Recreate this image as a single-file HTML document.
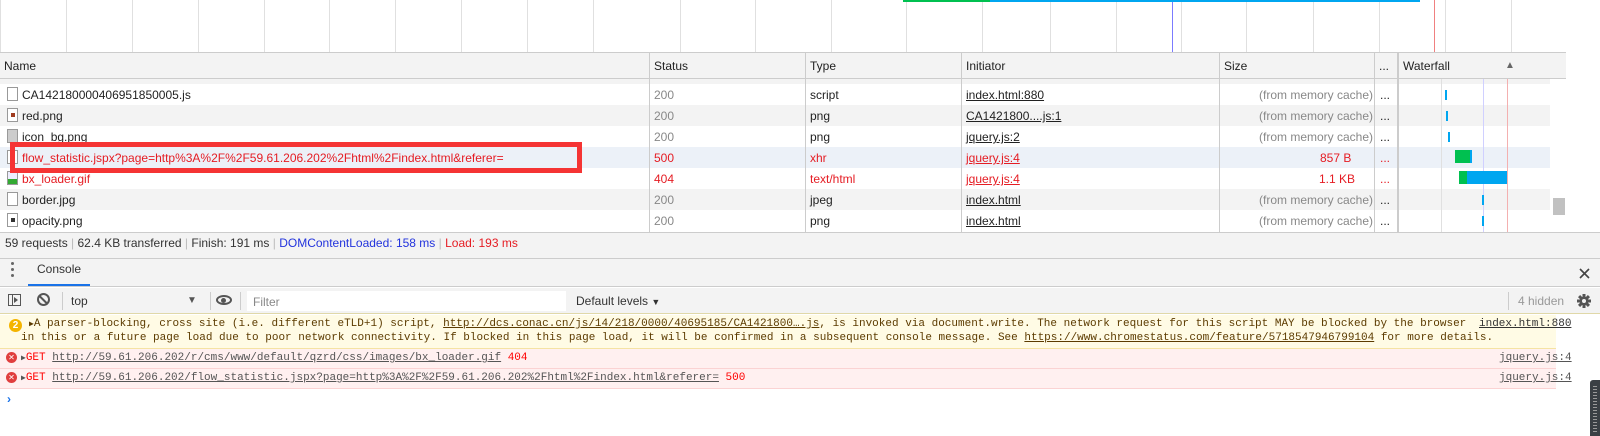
<!DOCTYPE html>
<html><head><meta charset="utf-8"><style>
*{box-sizing:border-box;margin:0;padding:0}
body{width:1600px;height:436px;overflow:hidden;background:#fff;font-family:"Liberation Sans",sans-serif;font-size:12px;color:#222;position:relative}
.a{position:absolute}
.vl{position:absolute;top:0;height:52px;width:1px;background:#e0e0e0}
.hdr{top:52px;left:0;width:1566px;height:27px;background:#f3f3f3;border-top:1px solid #ccc;border-bottom:1px solid #ccc}
.hdr span{position:absolute;top:6px}
.cs{position:absolute;top:52px;width:1px;height:180px;background:#ccc}
.row{position:absolute;left:0;width:1550px;height:21px}
.row span{position:absolute;top:4px;white-space:nowrap}
.g{color:#888}.r{color:#e51c23}.u{text-decoration:underline}
.ic{position:absolute;left:7px;top:3px;width:11px;height:14px;border:1px solid #999;background:#fff}
.mono{font-family:"Liberation Mono",monospace;font-size:11px;white-space:pre}
.msg{position:absolute;left:0;width:1556px}
</style></head><body>
<div class="vl" style="left:0"></div>
<div class="vl" style="left:66px"></div><div class="vl" style="left:132px"></div><div class="vl" style="left:198px"></div><div class="vl" style="left:264px"></div><div class="vl" style="left:329px"></div><div class="vl" style="left:395px"></div><div class="vl" style="left:461px"></div><div class="vl" style="left:527px"></div><div class="vl" style="left:593px"></div><div class="vl" style="left:680px"></div><div class="vl" style="left:755px"></div><div class="vl" style="left:831px"></div><div class="vl" style="left:906px"></div><div class="vl" style="left:982px"></div><div class="vl" style="left:1050px"></div><div class="vl" style="left:1116px"></div><div class="vl" style="left:1181px"></div><div class="vl" style="left:1246px"></div><div class="vl" style="left:1313px"></div><div class="vl" style="left:1379px"></div><div class="vl" style="left:1445px"></div><div class="vl" style="left:1511px"></div>
<div class="a" style="left:1172px;top:0;width:1px;height:52px;background:#7b7bff"></div>
<div class="a" style="left:1434px;top:0;width:1px;height:52px;background:#f08080"></div>
<div class="a" style="left:903px;top:0;width:87px;height:2px;background:#00c050"></div>
<div class="a" style="left:990px;top:0;width:430px;height:2px;background:#00a6f0"></div>
<div class="a hdr"><span style="left:4px">Name</span><span style="left:654px">Status</span><span style="left:810px">Type</span><span style="left:966px">Initiator</span><span style="left:1224px">Size</span><span style="left:1379px">...</span><span style="left:1403px">Waterfall</span><span style="left:1505px;font-size:10px;color:#666;top:7px">▲</span></div>
<div class="a" style="left:1550px;top:79px;width:16px;height:153px;background:#fff"></div>
<div class="a" style="left:1512px;top:86px;font-size:8px;color:#555">▲</div>
<div class="a" style="left:1553px;top:198px;width:12px;height:17px;background:#c1c1c1"></div>
<div class="a" style="left:1512px;top:218px;font-size:8px;color:#aaa">▼</div>
<div class="row" style="top:79px;height:5px;background:#f3f3f3;overflow:hidden"></div>
<div class="row" style="top:84px;background:#fff"><div class="ic"></div><span style="left:22px">CA142180000406951850005.js</span><span class="g" style="left:654px">200</span><span style="left:810px">script</span><span class="u" style="left:966px">index.html:880</span><span class="g" style="left:1259px">(from memory cache)</span><span style="left:1380px">...</span></div>
<div class="row" style="top:105px;background:#f3f3f3"><div class="ic"><div class="a" style="left:3px;top:4px;width:4px;height:4px;background:#a03c20"></div></div><span style="left:22px">red.png</span><span class="g" style="left:654px">200</span><span style="left:810px">png</span><span class="u" style="left:966px">CA1421800....js:1</span><span class="g" style="left:1259px">(from memory cache)</span><span style="left:1380px">...</span></div>
<div class="row" style="top:126px;background:#fff"><div class="ic" style="background:#ccc"></div><span style="left:22px">icon_bg.png</span><span class="g" style="left:654px">200</span><span style="left:810px">png</span><span class="u" style="left:966px">jquery.js:2</span><span class="g" style="left:1259px">(from memory cache)</span><span style="left:1380px">...</span></div>
<div class="row" style="top:147px;background:#ecf1f8"><div class="ic"></div><span class="r" style="left:22px">flow_statistic.jspx?page=http%3A%2F%2F59.61.206.202%2Fhtml%2Findex.html&amp;referer=</span><span class="r" style="left:654px">500</span><span class="r" style="left:810px">xhr</span><span class="r u" style="left:966px">jquery.js:4</span><span class="r" style="left:1320px">857 B</span><span class="r" style="left:1380px">...</span></div>
<div class="row" style="top:168px;background:#fff"><div class="ic" style="background:linear-gradient(#eef 60%,#3a3 60%)"></div><span class="r" style="left:22px">bx_loader.gif</span><span class="r" style="left:654px">404</span><span class="r" style="left:810px">text/html</span><span class="r u" style="left:966px">jquery.js:4</span><span class="r" style="left:1319px">1.1 KB</span><span class="r" style="left:1380px">...</span></div>
<div class="row" style="top:189px;background:#f3f3f3"><div class="ic"></div><span style="left:22px">border.jpg</span><span class="g" style="left:654px">200</span><span style="left:810px">jpeg</span><span class="u" style="left:966px">index.html</span><span class="g" style="left:1259px">(from memory cache)</span><span style="left:1380px">...</span></div>
<div class="row" style="top:210px;background:#fff"><div class="ic"><div class="a" style="left:3px;top:4px;width:4px;height:4px;background:#333"></div></div><span style="left:22px">opacity.png</span><span class="g" style="left:654px">200</span><span style="left:810px">png</span><span class="u" style="left:966px">index.html</span><span class="g" style="left:1259px">(from memory cache)</span><span style="left:1380px">...</span></div>
<div class="cs" style="left:649px"></div><div class="cs" style="left:805px"></div><div class="cs" style="left:961px"></div><div class="cs" style="left:1219px"></div><div class="cs" style="left:1374px"></div><div class="cs" style="left:1397px;width:2px"></div>
<div class="a" style="left:1441px;top:79px;width:1px;height:153px;background:#e0e0e0"></div>
<div class="a" style="left:1483px;top:79px;width:1px;height:153px;background:#d0d0ff"></div>
<div class="a" style="left:1507px;top:79px;width:1px;height:153px;background:#f4b0b0"></div>
<div class="a" style="left:1445px;top:90px;width:2px;height:10px;background:#00a6f0"></div>
<div class="a" style="left:1446px;top:111px;width:2px;height:10px;background:#00a6f0"></div>
<div class="a" style="left:1448px;top:132px;width:2px;height:10px;background:#00a6f0"></div>
<div class="a" style="left:1455px;top:150px;width:15px;height:13px;background:#00c050"></div><div class="a" style="left:1470px;top:150px;width:2px;height:13px;background:#00a6f0"></div>
<div class="a" style="left:1459px;top:171px;width:8px;height:13px;background:#00c050"></div><div class="a" style="left:1467px;top:171px;width:40px;height:13px;background:#00a6f0"></div>
<div class="a" style="left:1482px;top:195px;width:2px;height:10px;background:#00a6f0"></div>
<div class="a" style="left:1482px;top:216px;width:2px;height:10px;background:#00a6f0"></div>
<div class="a" style="left:10px;top:142px;width:572px;height:31px;border:5px solid #f53434"></div>
<div class="a" style="left:0;top:232px;width:1600px;height:27px;background:#f3f3f3;border-top:1px solid #ccc;border-bottom:1px solid #ccc"></div>
<div class="a" style="top:236px;left:5px;white-space:pre;color:#333">59 requests <span style="color:#bbb">|</span> 62.4 KB transferred <span style="color:#bbb">|</span> Finish: 191 ms <span style="color:#bbb">|</span> <span style="color:#2233dd">DOMContentLoaded: 158 ms</span> <span style="color:#bbb">|</span> <span style="color:#e51c23">Load: 193 ms</span></div>
<div class="a" style="left:0;top:259px;width:1600px;height:28px;background:#f3f3f3;border-bottom:1px solid #ccc"></div>
<div class="a" style="left:11px;top:262px;width:3px;height:3px;border-radius:50%;background:#666"></div>
<div class="a" style="left:11px;top:268px;width:3px;height:3px;border-radius:50%;background:#666"></div>
<div class="a" style="left:11px;top:274px;width:3px;height:3px;border-radius:50%;background:#666"></div>
<div class="a" style="left:37px;top:262px;color:#333">Console</div>
<div class="a" style="left:28px;top:284px;width:62px;height:2px;background:#1a73e8"></div>
<svg class="a" style="left:1579px;top:268px" width="11" height="11" viewBox="0 0 11 11"><path d="M1 1L10 10M10 1L1 10" stroke="#444" stroke-width="1.6"/></svg>
<div class="a" style="left:0;top:288px;width:1600px;height:26px;background:#f3f3f3;border-bottom:1px solid #e0d8a8"></div>
<div class="a" style="left:8px;top:294px;width:13px;height:12px;border:1px solid #555"><div class="a" style="left:3px;top:0;width:1px;height:10px;background:#555"></div><div class="a" style="left:5px;top:2px;border-left:4px solid #555;border-top:3px solid transparent;border-bottom:3px solid transparent"></div></div>
<div class="a" style="left:37px;top:293px;width:13px;height:13px;border:2px solid #555;border-radius:50%"><div class="a" style="left:3px;top:-1px;width:2px;height:11px;background:#555;transform:rotate(-45deg)"></div></div>
<div class="a" style="left:62px;top:292px;width:1px;height:18px;background:#ccc"></div>
<div class="a" style="left:71px;top:294px;color:#333">top</div>
<div class="a" style="left:187px;top:295px;font-size:10px;color:#555">▼</div>
<div class="a" style="left:210px;top:292px;width:1px;height:18px;background:#ccc"></div>
<div class="a" style="left:216px;top:295px;width:16px;height:10px;border:2px solid #555;border-radius:50%"><div class="a" style="left:3px;top:1px;width:5px;height:5px;background:#555;border-radius:50%"></div></div>
<div class="a" style="left:240px;top:292px;width:1px;height:18px;background:#ccc"></div>
<div class="a" style="left:247px;top:291px;width:319px;height:20px;background:#fff"></div>
<div class="a" style="left:253px;top:295px;color:#888">Filter</div>
<div class="a" style="left:576px;top:294px;color:#333">Default levels <span style="font-size:9px">▼</span></div>
<div class="a" style="left:1508px;top:292px;width:1px;height:18px;background:#ccc"></div>
<div class="a" style="left:1518px;top:294px;color:#999">4 hidden</div>
<svg class="a" style="left:1577px;top:294px" width="14" height="14" viewBox="0 0 14 14"><g fill="#555"><circle cx="7" cy="7" r="4.5"/><rect x="5.5" y="0" width="3" height="14"/><rect x="0" y="5.5" width="14" height="3"/><rect x="5.5" y="0" width="3" height="14" transform="rotate(45 7 7)"/><rect x="5.5" y="0" width="3" height="14" transform="rotate(-45 7 7)"/></g><circle cx="7" cy="7" r="2" fill="#f3f3f3"/></svg>
<div class="msg" style="top:315px;height:34px;background:#fffbe5;border-bottom:1px solid #f5e3a3"></div>
<div class="a" style="left:9px;top:319px;width:13px;height:13px;border-radius:50%;background:#f4b400;color:#fff;font-size:10px;font-weight:bold;text-align:center;line-height:13px">2</div>
<div class="a mono" style="left:29px;top:318px;color:#5c3b00"><span style="font-size:8px">▶</span>A parser-blocking, cross site (i.e. different eTLD+1) script, <span class="u">http://dcs.conac.cn/js/14/218/0000/40695185/CA1421800….js</span>, is invoked via document.write. The network request for this script MAY be blocked by the browser</div>
<div class="a mono u" style="left:1479px;top:318px;color:#333">index.html:880</div>
<div class="a mono" style="left:21px;top:332px;color:#5c3b00">in this or a future page load due to poor network connectivity. If blocked in this page load, it will be confirmed in a subsequent console message. See <span class="u">https://www.chromestatus.com/feature/5718547946799104</span> for more details.</div>
<div class="msg" style="top:349px;height:20px;background:#fff0f0;border-bottom:1px solid #fbd3d3"></div>
<div class="msg" style="top:369px;height:20px;background:#fff0f0;border-bottom:1px solid #fbd3d3"></div>
<div class="a" style="left:6px;top:352px;width:11px;height:11px;border-radius:50%;background:#e03e3e;color:#fff;font-size:8px;text-align:center;line-height:11px">✕</div>
<div class="a" style="left:6px;top:372px;width:11px;height:11px;border-radius:50%;background:#e03e3e;color:#fff;font-size:8px;text-align:center;line-height:11px">✕</div>
<div class="a mono" style="left:21px;top:352px;color:#f00"><span style="font-size:8px;color:#555">▶</span>GET <span class="u" style="color:#555">http://59.61.206.202/r/cms/www/default/qzrd/css/images/bx_loader.gif</span> 404</div>
<div class="a mono" style="left:21px;top:372px;color:#f00"><span style="font-size:8px;color:#555">▶</span>GET <span class="u" style="color:#555">http://59.61.206.202/flow_statistic.jspx?page=http%3A%2F%2F59.61.206.202%2Fhtml%2Findex.html&amp;referer=</span> 500</div>
<div class="a mono u" style="left:1499px;top:352px;color:#555">jquery.js:4</div>
<div class="a mono u" style="left:1499px;top:372px;color:#555">jquery.js:4</div>
<div class="a" style="left:7px;top:392px;color:#1a73e8;font-size:12px;font-weight:bold">›</div>
<div class="a" style="left:1590px;top:380px;width:10px;height:56px;background:#3a3f44;border-radius:3px 0 0 0"><div class="a" style="left:3px;top:6px;width:4px;height:46px;background:repeating-linear-gradient(#999 0 1px,transparent 1px 3px)"></div></div>
</body></html>
